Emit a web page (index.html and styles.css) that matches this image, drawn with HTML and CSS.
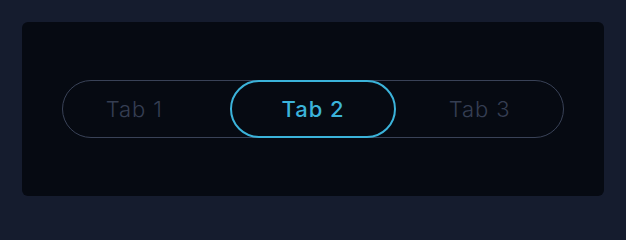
FILE: index.html
```html
<!DOCTYPE html>
<html>
<head>
<meta charset="utf-8">
<link rel="stylesheet" href="styles.css">
</head>
<body>
<div class="card">
  <div class="tabs">
    <div class="tab first">Tab 1</div>
    <div class="tab active">Tab 2</div>
    <div class="tab">Tab 3</div>
  </div>
</div>
</body>
</html>
```
FILE: styles.css
```css
html, body {
  margin: 0;
  padding: 0;
  background: #151c2e;
}
body {
  padding: 22px 22px 23px 22px;
  font-family: Inter, "Noto Sans", sans-serif;
}
.card {
  background: #060a12;
  border-radius: 6px;
  height: 174px;
  padding: 0 40px;
  display: flex;
  align-items: center;
}
.tabs {
  flex: 1;
  height: 58px;
  box-sizing: border-box;
  border: 1px solid #394257;
  border-radius: 29px;
  display: grid;
  grid-template-columns: 1fr 1fr 1fr;
}
.tab {
  display: flex;
  align-items: center;
  justify-content: center;
  font-size: 22px;
  font-weight: 300;
  letter-spacing: 0.9px;
  color: #353e52;
  border-radius: 29px;
  margin: -1px 0;
  padding-bottom: 1px;
}
.tab.first {
  padding-right: 24px;
}
.tab.active {
  border: 2px solid #3bb3da;
  color: #3bb3da;
  font-weight: 500;
}
```
